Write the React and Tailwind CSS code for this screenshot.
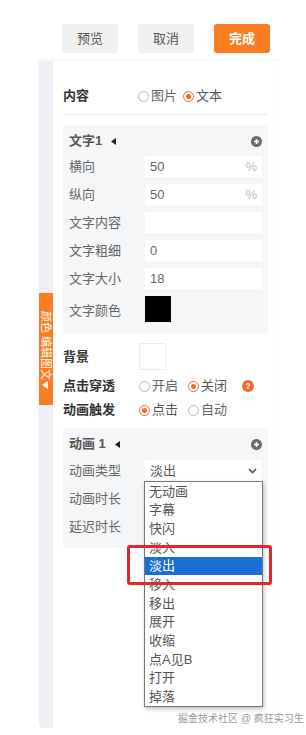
import React from "react";

const F = { fontFamily: '"Liberation Sans", "Noto Sans CJK SC", sans-serif' };

function Radio({ checked, label }) {
  return (
    <span className="flex items-center gap-[2px]">
      {checked ? (
        <span className="w-[11px] h-[11px] rounded-full border-[1.5px] border-[#f0682c] flex items-center justify-center">
          <span className="w-[5px] h-[5px] rounded-full bg-[#f0682c]" />
        </span>
      ) : (
        <span className="w-[11px] h-[11px] rounded-full border border-[#b9b9b9]" />
      )}
      <span className={checked ? "text-[#555]" : "text-[#666]"}>{label}</span>
    </span>
  );
}

function PlusIcon() {
  return (
    <span className="w-[11px] h-[11px] rounded-full bg-[#6b6b6b] flex items-center justify-center">
      <svg width="7" height="7" viewBox="0 0 7 7">
        <path d="M3.5 1v5M1 3.5h5" stroke="#fff" strokeWidth="1.6" />
      </svg>
    </span>
  );
}

function Tri() {
  return (
    <svg width="5" height="7" viewBox="0 0 5 7" className="ml-[9px]">
      <path d="M5 0L0 3.5L5 7z" fill="#222" />
    </svg>
  );
}

function Row({ label, children }) {
  return (
    <div className="flex items-center h-[21px]">
      <div className="w-[76px] text-[#666] text-[13px]">{label}</div>
      {children}
    </div>
  );
}

function Input({ value, unit }) {
  return (
    <div className="w-[117px] h-[21px] bg-white flex items-center justify-between px-[5px] text-[13px] text-[#666]">
      <span>{value}</span>
      {unit && <span className="text-[#bbb]">{unit}</span>}
    </div>
  );
}

const items = ["无动画", "字幕", "快闪", "淡入", "淡出", "移入", "移出", "展开", "收缩", "点A见B", "打开", "掉落"];

export default function App() {
  return (
    <div className="relative w-[306px] h-[735px] bg-white overflow-hidden" style={F}>
      <div className="flex gap-[20px] pl-[62px] pt-[24px]">
        <div className="w-[56px] h-[29px] rounded-[3px] bg-[#f0f0f0] text-[#555] text-[13px] flex items-center justify-center">预览</div>
        <div className="w-[56px] h-[29px] rounded-[3px] bg-[#f0f0f0] text-[#555] text-[13px] flex items-center justify-center">取消</div>
        <div className="w-[56px] h-[29px] rounded-[3px] bg-[#fa7d22] text-white text-[13px] font-bold flex items-center justify-center">完成</div>
      </div>

      <div className="ml-[39px] mt-[8px] w-[238px] h-[667px] flex shadow-[0_-2px_4px_rgba(0,0,0,0.04)]">
        <div className="w-[14px] bg-[#edf1f6] flex flex-col rounded-bl-[4px]">
          <div className="h-[232px]" />
          <div className="h-[112px] bg-[#fa7d22] flex items-center justify-center overflow-hidden">
            <div className="rotate-90 whitespace-nowrap text-white text-[11px] leading-none flex items-center gap-[2px]">
              <span>颜色 编辑图文</span>
              <svg width="6" height="8" viewBox="0 0 6 8" className="-rotate-90">
                <path d="M0 0L6 4L0 8z" fill="#fff" transform="rotate(180 3 4)" />
              </svg>
            </div>
          </div>
        </div>

        <div className="flex-1 bg-white px-[10px] pt-[22px]">
          <div className="flex items-center h-[26px] text-[13px]">
            <div className="w-[75px] font-bold text-[#333]">内容</div>
            <div className="flex gap-[6px]">
              <Radio label="图片" />
              <Radio checked label="文本" />
            </div>
          </div>
          <div className="mt-[5px] border-b border-[#ebebeb]" />

          <div className="mt-[10px] bg-[#f5f6f7] px-[6px] pt-[4px] pb-[11px]">
            <div className="flex items-center justify-between h-[24px]">
              <div className="flex items-center text-[13px] font-bold text-[#555]">
                文字1<Tri />
              </div>
              <PlusIcon />
            </div>
            <div className="mt-[3px] flex flex-col gap-[7px]">
              <Row label="横向"><Input value="50" unit="%" /></Row>
              <Row label="纵向"><Input value="50" unit="%" /></Row>
              <Row label="文字内容"><Input value="" /></Row>
              <Row label="文字粗细"><Input value="0" /></Row>
              <Row label="文字大小"><Input value="18" /></Row>
              <div className="flex items-center h-[26px]">
                <div className="w-[76px] text-[#666] text-[13px] pt-[3px]">文字颜色</div>
                <div className="w-[26px] h-[26px] bg-black" />
              </div>
            </div>
          </div>

          <div className="mt-[10px] flex items-center h-[27px] text-[13px]">
            <div className="w-[76px] font-bold text-[#333]">背景</div>
            <div className="w-[27px] h-[27px] border border-[#ececec] bg-white" />
          </div>
          <div className="mt-[6px] flex items-center h-[20px] text-[13px]">
            <div className="w-[76px] font-bold text-[#333]">点击穿透</div>
            <div className="flex gap-[10px] items-center">
              <Radio label="开启" />
              <Radio checked label="关闭" />
              <span className="ml-[5px] w-[12px] h-[12px] rounded-full bg-[#f0682c] text-white text-[9px] font-bold flex items-center justify-center leading-none">?</span>
            </div>
          </div>
          <div className="mt-[4px] flex items-center h-[20px] text-[13px]">
            <div className="w-[76px] font-bold text-[#333]">动画触发</div>
            <div className="flex gap-[10px]">
              <Radio checked label="点击" />
              <Radio label="自动" />
            </div>
          </div>

          <div className="mt-[8px] bg-[#f5f6f7] px-[6px] pt-[4px] pb-[11px]">
            <div className="flex items-center justify-between h-[24px]">
              <div className="flex items-center text-[13px] font-bold text-[#555]">
                动画 1<Tri />
              </div>
              <PlusIcon />
            </div>
            <div className="mt-[4px] flex flex-col gap-[7px]">
              <Row label="动画类型">
                <div className="relative w-[117px] h-[21px] bg-white flex items-center justify-between px-[5px] text-[13px] text-[#555]">
                  <span>淡出</span>
                  <svg width="9" height="6" viewBox="0 0 9 6">
                    <path d="M1 1l3.5 3.5L8 1" stroke="#555" strokeWidth="1.6" fill="none" />
                  </svg>
                  <div className="absolute top-full left-[-1px] w-[119px] z-10 bg-white border border-[#767676] shadow-[1px_2px_4px_rgba(0,0,0,0.25)] text-[13px] text-[#555]">
                    {items.map((it) => (
                      <div
                        key={it}
                        className={
                          "h-[18.7px] flex items-center px-[4px] " +
                          (it === "淡出" ? "bg-[#1b6ed6] text-white" : "")
                        }
                      >
                        {it}
                      </div>
                    ))}
                  </div>
                </div>
              </Row>
              <Row label="动画时长"><Input value="" /></Row>
              <Row label="延迟时长"><Input value="" /></Row>
            </div>
          </div>
        </div>
      </div>

      <div className="absolute left-[127px] top-[545px] w-[145px] h-[40px] border-[3px] border-[#e4262c] rounded-[3px] z-20" />
      <div className="absolute left-[178px] top-[711px] text-[10px] text-[#999] whitespace-nowrap">掘金技术社区 @ 疯狂实习生</div>
    </div>
  );
}
